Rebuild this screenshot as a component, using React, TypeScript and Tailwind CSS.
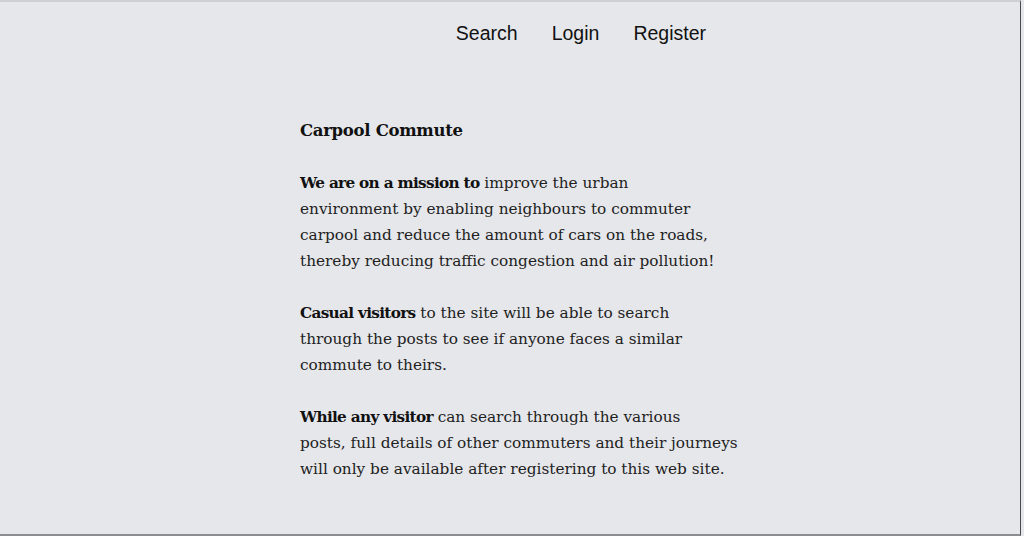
import React from "react";

const serif = { fontFamily: '"DejaVu Serif", Georgia, serif' };

export default function App() {
  return (
    <div className="flex h-[536px] w-[1024px] overflow-hidden bg-[#e6e7eb]">
      <div className="flex h-full w-[1021px] flex-col border-t-2 border-b-2 border-r border-t-[#cfd0d4] border-b-[#8c8d91] border-r-[#4a4a4a]">
        <nav
          className="flex w-[740px] justify-end gap-[34px] pt-[19px] pr-[34px] text-[19.5px] leading-6 text-[#111]"
          style={{ fontFamily: '"Liberation Sans", Arial, sans-serif' }}
        >
          <a>Search</a>
          <a>Login</a>
          <a>Register</a>
        </nav>
        <main
          className="ml-[300px] mt-[73px] w-[460px] whitespace-nowrap text-[15.3px] leading-[26px] text-[#222]"
          style={serif}
        >
          <p className="text-[16.5px] font-bold tracking-[-0.3px] text-[#111]">Carpool Commute</p>
          <p className="mt-[26px]">
            <b className="tracking-[-0.7px] text-[#111]">We are on a mission to</b> improve the urban
            <br />
            environment by enabling neighbours to commuter
            <br />
            carpool and reduce the amount of cars on the roads,
            <br />
            thereby reducing traffic congestion and air pollution!
          </p>
          <p className="mt-[26px]">
            <b className="tracking-[-0.7px] text-[#111]">Casual visitors</b> to the site will be able to search
            <br />
            through the posts to see if anyone faces a similar
            <br />
            commute to theirs.
          </p>
          <p className="mt-[26px]">
            <b className="tracking-[-0.7px] text-[#111]">While any visitor</b> can search through the various
            <br />
            posts, full details of other commuters and their journeys
            <br />
            will only be available after registering to this web site.
          </p>
        </main>
      </div>
      <div className="h-full w-[3px] bg-[#e6e7eb]" />
    </div>
  );
}
